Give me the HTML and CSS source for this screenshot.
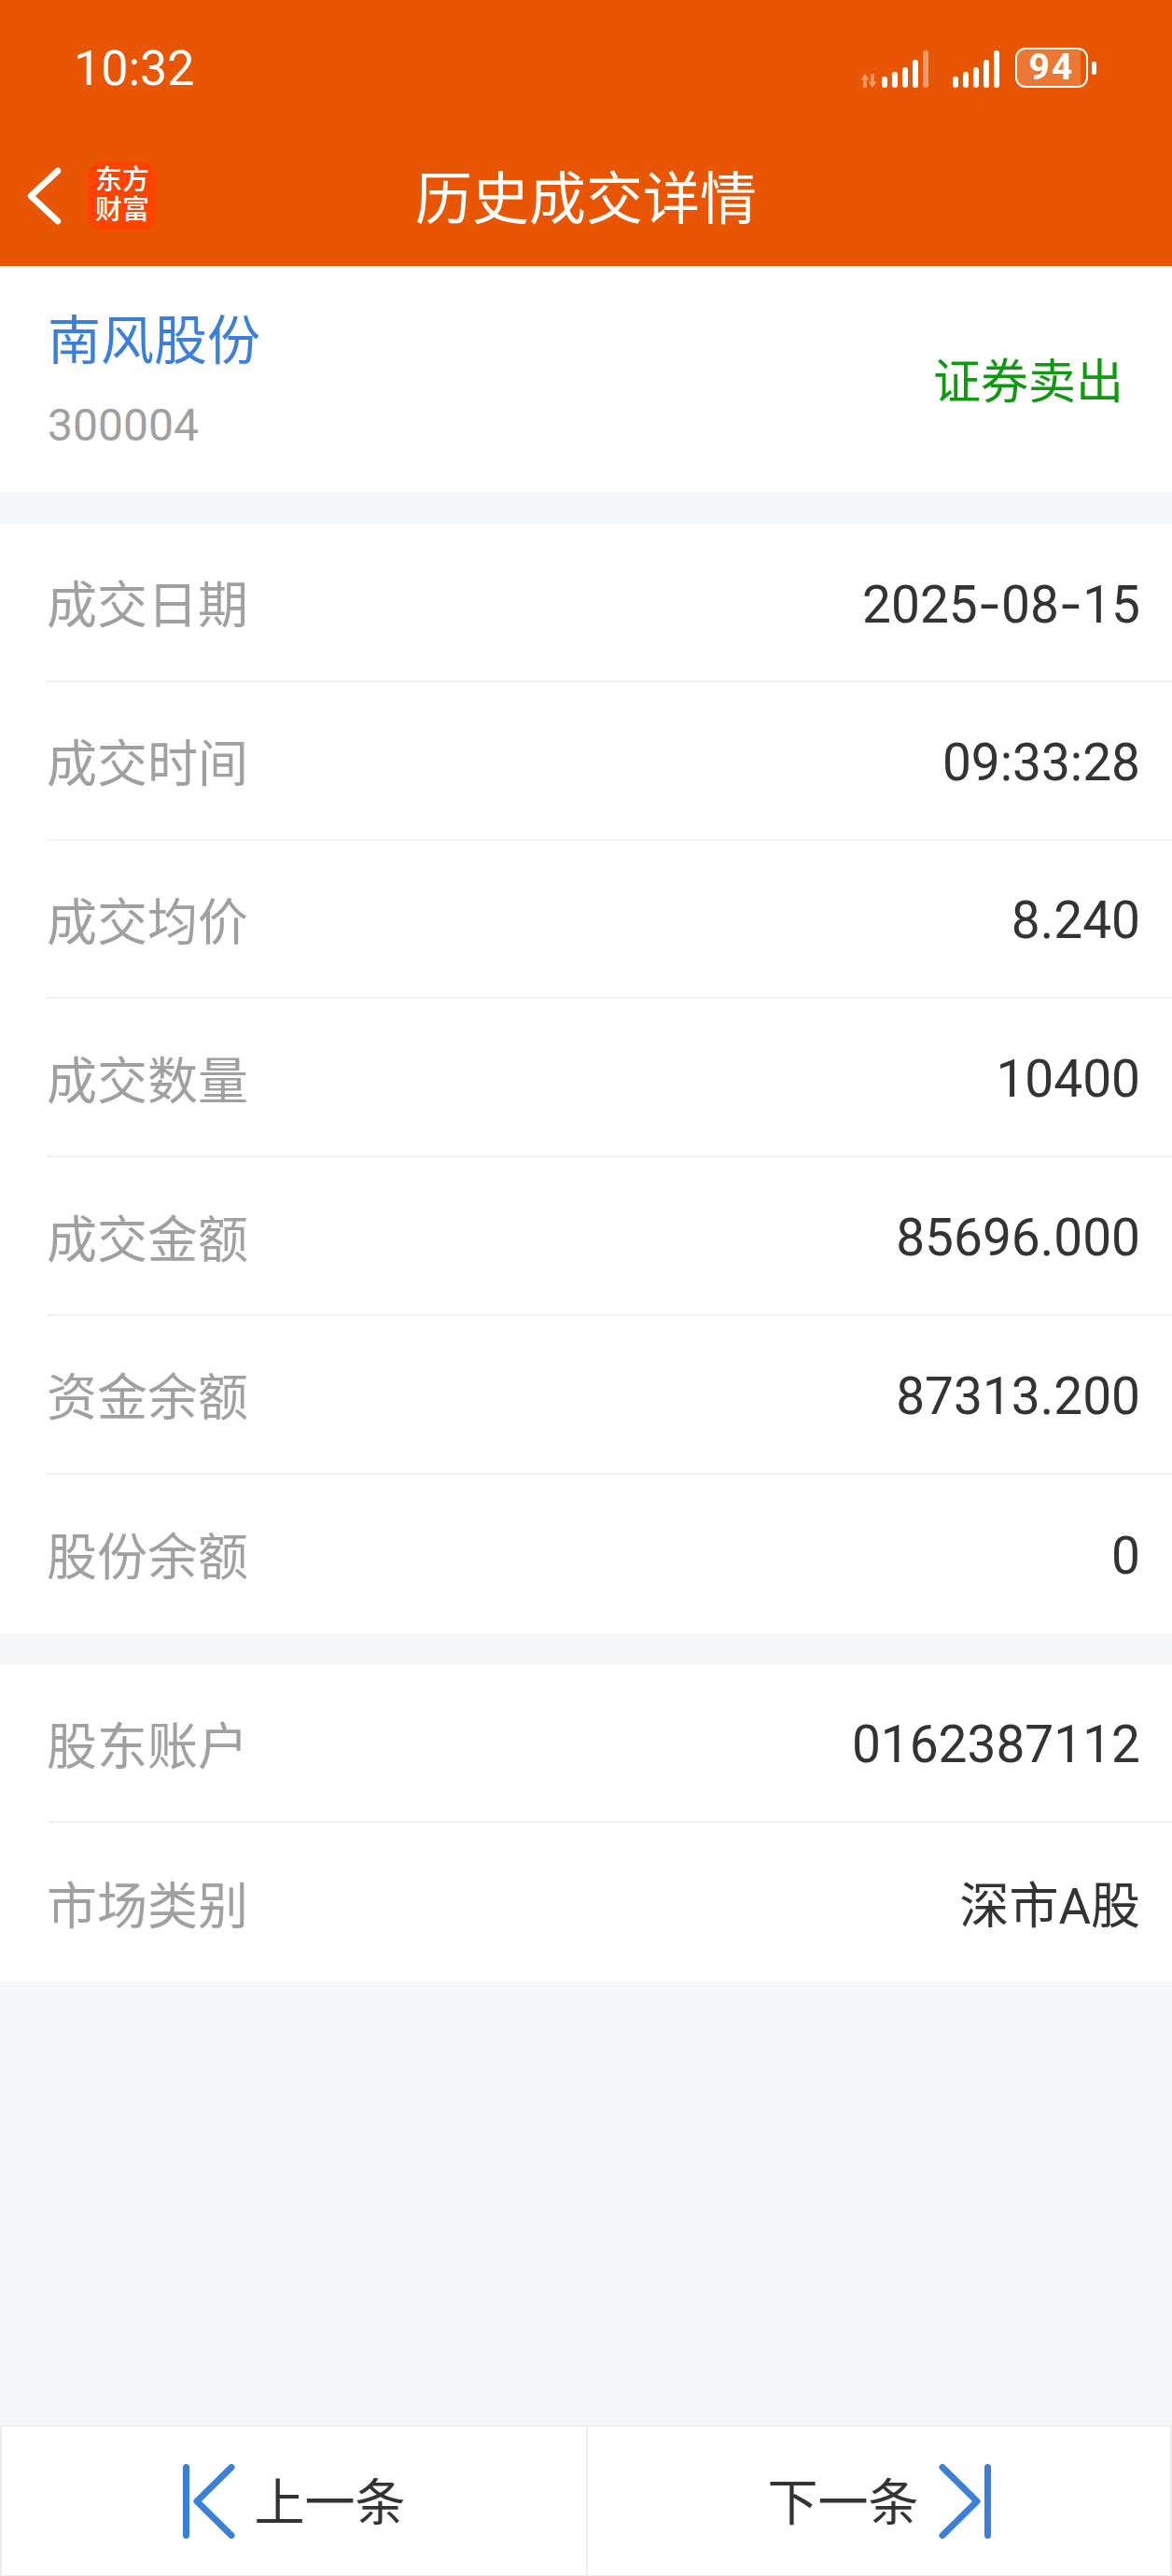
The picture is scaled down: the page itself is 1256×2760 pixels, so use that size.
FILE: index.html
```html
<!DOCTYPE html>
<html lang="zh-CN">
<head>
    <meta charset="UTF-8">
    <meta name="viewport" content="width=device-width, initial-scale=1.0">
    <title>历史成交详情</title>
    <link rel="stylesheet" href="styles.css">
</head>
<body>
    <div class="page">
        <div class="header">
            <div class="status-bar">
                <span class="clock">10:32</span>
                <div class="status-icons">
                    <svg class="net-arrows" width="18" height="15" viewBox="0 0 18 15">
                        <path d="M5 0 L9.500 6.500 H6.800 V15 H3.200 V6.500 H0.500 Z M13 15 L8.500 8.500 H11.200 V0 H14.800 V8.500 H17.500 Z" fill="#fff" fill-opacity="0.4"/>
                    </svg>
                    <div class="signal">
                        <i class="bar b1"></i><i class="bar b2"></i><i class="bar b3"></i><i class="bar b4"></i><i class="bar b5 dim"></i>
                    </div>
                    <div class="signal second">
                        <i class="bar b1"></i><i class="bar b2"></i><i class="bar b3"></i><i class="bar b4"></i><i class="bar b5"></i>
                    </div>
                    <div class="battery">
                        <div class="battery-body"><span class="battery-level">94</span></div>
                        <div class="battery-tip"></div>
                    </div>
                </div>
            </div>
            <div class="nav-bar">
                <div class="nav-left">
                    <svg class="back" width="38" height="62" viewBox="0 0 38 62">
                        <path d="M34 4 L5 31 L34 58" fill="none" stroke="#fff" stroke-width="6.500" stroke-linecap="round" stroke-linejoin="round"/>
                    </svg>
                    <div class="logo">东方<br>财富</div>
                </div>
                <h1 class="title">历史成交详情</h1>
            </div>
        </div>

        <div class="stock">
            <div class="stock-info">
                <div class="stock-name">南风股份</div>
                <div class="stock-code">300004</div>
            </div>
            <div class="trade-type">证券卖出</div>
        </div>

        <div class="group">
            <div class="row"><span class="label">成交日期</span><span class="value">2025<span class="dash">-</span>08<span class="dash">-</span>15</span></div>
            <div class="row"><span class="label">成交时间</span><span class="value">09:33:28</span></div>
            <div class="row"><span class="label">成交均价</span><span class="value">8.240</span></div>
            <div class="row"><span class="label">成交数量</span><span class="value">10400</span></div>
            <div class="row"><span class="label">成交金额</span><span class="value">85696.000</span></div>
            <div class="row"><span class="label">资金余额</span><span class="value">87313.200</span></div>
            <div class="row"><span class="label">股份余额</span><span class="value">0</span></div>
        </div>

        <div class="group">
            <div class="row"><span class="label">股东账户</span><span class="value">0162387112</span></div>
            <div class="row"><span class="label">市场类别</span><span class="value market">深市A股</span></div>
        </div>

        <div class="pager">
            <div class="pager-btn">
                <svg width="56" height="80" viewBox="0 0 56 80">
                    <path d="M3.500 3.500 V76.500 M52 3.500 L15 40 L52 76.500" fill="none" stroke="#3a80d8" stroke-width="7" stroke-linecap="round" stroke-linejoin="round"/>
                </svg>
                <span class="pager-text">上一条</span>
            </div>
            <div class="pager-btn">
                <span class="pager-text">下一条</span>
                <svg width="56" height="80" viewBox="0 0 56 80">
                    <path d="M52.500 3.500 V76.500 M4 3.500 L41 40 L4 76.500" fill="none" stroke="#3a80d8" stroke-width="7" stroke-linecap="round" stroke-linejoin="round"/>
                </svg>
            </div>
        </div>
    </div>
</body>
</html>
```

FILE: styles.css
```css
* { margin: 0; padding: 0; box-sizing: border-box; }
body {
    font-family: Roboto, "Noto Sans CJK SC", sans-serif;
    background: #f6f7f9;
    color: #333;
}
.page {
    width: 1256px;
    height: 2760px;
    display: flex;
    flex-direction: column;
}

/* top bar */
.header { background: #e85603; height: 285px; color: #fff; }
.status-bar {
    height: 145px;
    display: flex;
    justify-content: space-between;
    align-items: center;
    padding: 0 81px 0 79px;
}
.clock { font-size: 52px; padding-top: 2px; }
.status-icons { display: flex; align-items: flex-end; }
.net-arrows { margin-right: 5px; }
.signal { display: flex; align-items: flex-end; gap: 5px; height: 40px; }
.signal.second { margin: 0 17px 0 26px; }
.bar { display: block; width: 6px; background: #fff; border-radius: 3px; }
.bar.dim { opacity: 0.4; }
.b1 { height: 12px; }
.b2 { height: 17px; }
.b3 { height: 22px; }
.b4 { height: 30px; }
.b5 { height: 40px; }
.battery { display: flex; align-items: center; gap: 4px; }
.battery-body {
    width: 78px;
    height: 43px;
    border: 2.500px solid #fff;
    border-radius: 11px;
    background: linear-gradient(90deg, rgba(255,255,255,0.2) 92%, transparent 92%);
    display: flex;
    align-items: center;
    justify-content: center;
}
.battery-level { font-size: 39px; font-weight: 700; line-height: 1; letter-spacing: 2px; }
.battery-tip { width: 5px; height: 14px; background: #fff; border-radius: 2px; }

.nav-bar {
    height: 140px;
    display: grid;
    grid-template-columns: 1fr auto 1fr;
    align-items: center;
    padding-bottom: 10px;
}
.nav-left { display: flex; align-items: center; gap: 28px; padding-left: 28px; }
.logo {
    width: 74px;
    height: 74px;
    border-radius: 16px;
    background: #fd4302;
    font-size: 29px;
    line-height: 32px;
    font-weight: 500;
    text-align: center;
    padding-top: 4px;
}
.title { font-size: 61px; font-weight: 400; padding-bottom: 4px; }

/* stock summary */
.stock {
    height: 242px;
    background: #fff;
    display: flex;
    justify-content: space-between;
    align-items: center;
    padding: 0 52px 0 51px;
}
.stock-name { font-size: 57px; color: #3a7fd9; line-height: 78px; }
.stock-code { font-size: 48px; color: #a0a0a0; line-height: 60px; margin-top: 21px; }
.trade-type { font-size: 51px; color: #119811; padding-bottom: 3px; }

/* detail rows */
.group { background: #fff; margin-top: 34px; }
.row {
    height: 169.800px;
    display: flex;
    justify-content: space-between;
    align-items: center;
    margin-left: 50px;
    padding-right: 34px;
    border-bottom: 2px solid #f1f1f1;
    font-size: 54px;
}
.row:last-child { border-bottom: none; }
.label { color: #a0a0a0; }
.value { font-size: 55px; padding-top: 4px; }
.value.market { font-size: 53px; padding-top: 0; }
.dash { font-family: Inter, sans-serif; }

/* previous / next */
.pager {
    margin-top: auto;
    height: 162px;
    display: grid;
    grid-template-columns: 1fr 1fr;
    background: #fff;
    border: 2px solid #eee;
    border-bottom-width: 1px;
}
.pager-btn {
    display: flex;
    align-items: center;
    justify-content: center;
    gap: 21px;
    font-size: 54px;
}
.pager-text { padding-bottom: 4px; }
.pager-btn + .pager-btn { border-left: 2px solid #eee; }
```
